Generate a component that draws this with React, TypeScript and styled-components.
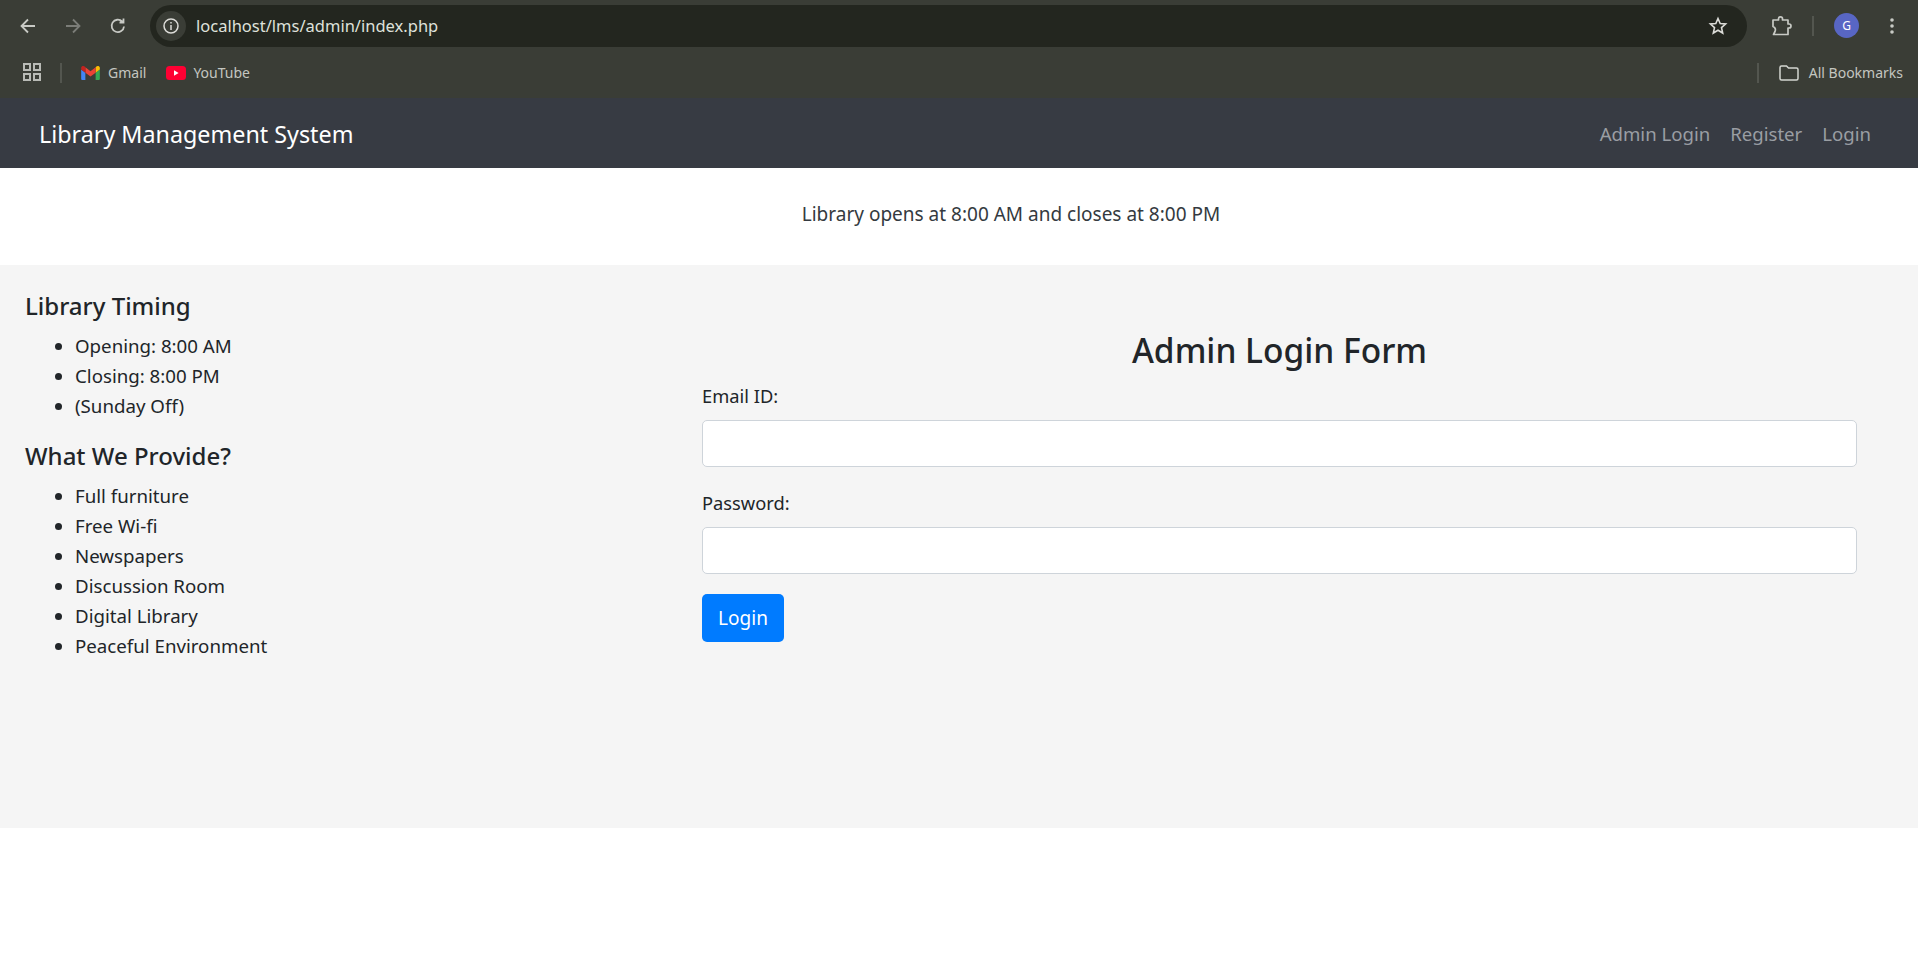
import React from 'react';
import styled, { createGlobalStyle } from 'styled-components';

const Global = createGlobalStyle`
  html, body { margin: 0; padding: 0; background: #fff; }
  * { box-sizing: border-box; }
`;

const pageFont = `"Noto Sans", "Open Sans", sans-serif`;

const Page = styled.div`
  height: 961px;
  overflow: hidden;
  font-family: ${pageFont};
  color: #212529;
`;

const Toolbar = styled.div`
  height: 50px;
  background: #3a3d36;
  display: flex;
  align-items: center;
  padding: 1px 23px 0 5px;
`;

const NavIcon = styled.div<{ $dim?: boolean }>`
  width: 45px;
  height: 32px;
  display: flex;
  align-items: center;
  justify-content: center;
  color: ${p => (p.$dim ? '#7b7d78' : '#c8cac5')};
`;

const Omnibox = styled.div`
  flex: 1;
  height: 42px;
  margin: 0 23px 0 10px;
  border-radius: 21px;
  background: #23261f;
  display: flex;
  align-items: center;
  padding: 0 19px 0 6px;
`;

const InfoChip = styled.div`
  width: 30px;
  height: 30px;
  border-radius: 50%;
  background: #3a3d36;
  display: flex;
  align-items: center;
  justify-content: center;
  color: #dcdcd8;
`;

const Url = styled.div`
  flex: 1;
  margin-left: 10px;
  font-size: 16.5px;
  color: #dfe1db;
`;

const Divider = styled.div<{ $left?: number }>`
  width: 2px;
  height: 20px;
  margin-left: ${p => p.$left ?? 0}px;
  background: #53564f;
`;

const Avatar = styled.div`
  width: 25px;
  height: 25px;
  border-radius: 50%;
  background: #5866c4;
  color: #fff;
  font-size: 12px;
  display: flex;
  align-items: center;
  justify-content: center;
  margin: 0 30px 0 20px;
`;

const Extras = styled.div`
  display: flex;
  align-items: center;
  color: #c8cac5;
`;

const BookmarkBar = styled.div`
  height: 48px;
  background: #3a3d36;
  display: flex;
  align-items: center;
  padding: 0 15px 3px 23px;
  font-size: 14px;
  color: #c4c6c0;
`;

const Bookmark = styled.div<{ $gap: number; $left: number }>`
  display: flex;
  align-items: center;
  gap: ${p => p.$gap}px;
  margin-left: ${p => p.$left}px;
`;

const BarSpacer = styled.div`
  flex: 1;
`;

const Navbar = styled.nav`
  height: 70px;
  background: #373b43;
  display: flex;
  align-items: center;
  justify-content: space-between;
  padding: 2px 47px 0 39px;
`;

const Brand = styled.div`
  font-size: 23.3px;
  color: #fff;
`;

const NavLinks = styled.div`
  display: flex;
  gap: 20px;
  margin-bottom: 2px;
`;

const NavLink = styled.a`
  font-size: 18.6px;
  color: #9a9ea3;
`;

const Notice = styled.div`
  height: 97px;
  display: flex;
  align-items: center;
  justify-content: center;
  padding: 0 0 5px 104px;
  font-size: 19px;
  color: #343a40;
`;

const Content = styled.main`
  height: 563px;
  background: #f5f5f5;
  display: grid;
  grid-template-columns: 677px 1fr;
  padding: 26px 61px 0 25px;
`;

const Heading = styled.h5`
  margin: 0 0 10px;
  font-size: 24px;
  line-height: 30px;
  font-weight: 500;
`;

const List = styled.ul`
  margin: 0 0 20px;
  padding-left: 50px;
  font-size: 18.7px;
  line-height: 30px;
`;

const FormCol = styled.section`
  padding-top: 38.4px;
`;

const FormTitle = styled.h3`
  margin: 0 0 9px;
  text-align: center;
  font-size: 33.5px;
  line-height: 42px;
  font-weight: 500;
`;

const Field = styled.div`
  margin-bottom: 20px;
`;

const Label = styled.label`
  display: block;
  margin-bottom: 8.5px;
  font-size: 18.3px;
  line-height: 31px;
`;

const Input = styled.input`
  display: block;
  width: 100%;
  height: 47.5px;
  background: #fff;
  border: 1px solid #ced4da;
  border-radius: 5px;
  outline: none;
`;

const Submit = styled.button`
  width: 82px;
  height: 47.5px;
  border: 0;
  border-radius: 5px;
  background: #007bff;
  color: #fff;
  font-family: ${pageFont};
  font-size: 19px;
`;

const GmailIcon = () => (
  <svg width="19" height="14" viewBox="0 0 20 15">
    <path d="M1.4 15H4.5V7.2L0 3.8V13.6C0 14.4.6 15 1.4 15Z" fill="#4285f4" />
    <path d="M15.5 15H18.6C19.4 15 20 14.4 20 13.6V3.8L15.5 7.2Z" fill="#34a853" />
    <path d="M15.5 1.3V7.2L20 3.8V2C20 .3 18 -.7 16.7 .4Z" fill="#fbbc04" />
    <path d="M4.5 7.2V1.3L10 5.5L15.5 1.3V7.2L10 11.3Z" fill="#ea4335" />
    <path d="M0 2V3.8L4.5 7.2V1.3L3.3 .4C2 -.7 0 .3 0 2Z" fill="#c5221f" />
  </svg>
);

const YoutubeIcon = () => (
  <svg width="20" height="14" viewBox="0 0 20 14">
    <rect width="20" height="14" rx="3.5" fill="#ff0033" />
    <path d="M8 4.3V9.7L12.6 7Z" fill="#fff" />
  </svg>
);

export default function App() {
  return (
    <Page>
      <Global />
      <Toolbar>
        <NavIcon>
          <svg width="18" height="18" viewBox="0 0 18 18" fill="none" stroke="currentColor" strokeWidth="1.8"><path d="M16 9H3M9 2.5L2.5 9L9 15.5" /></svg>
        </NavIcon>
        <NavIcon $dim>
          <svg width="18" height="18" viewBox="0 0 18 18" fill="none" stroke="currentColor" strokeWidth="1.8"><path d="M2 9H15M9 2.5L15.5 9L9 15.5" /></svg>
        </NavIcon>
        <NavIcon>
          <svg width="18" height="18" viewBox="0 0 18 18" fill="none" stroke="currentColor" strokeWidth="1.8"><path d="M15 9.5A6.2 6.2 0 1 1 13.2 4.5M14.5 1.5V5.5H10.5" /></svg>
        </NavIcon>
        <Omnibox>
          <InfoChip>
            <svg width="18" height="18" viewBox="0 0 18 18" fill="none" stroke="currentColor" strokeWidth="1.5"><circle cx="9" cy="9" r="7" /><path d="M9 8V13M9 5V6.4" /></svg>
          </InfoChip>
          <Url>localhost/lms/admin/index.php</Url>
          <svg width="20" height="20" viewBox="0 0 20 20" fill="none" stroke="#dcdcd8" strokeWidth="1.6"><path d="M10 2.5L12.2 7.5L17.6 8L13.5 11.6L14.7 17L10 14.2L5.3 17L6.5 11.6L2.4 8L7.8 7.5Z" /></svg>
        </Omnibox>
        <Extras>
          <svg width="22" height="22" viewBox="0 0 22 22" fill="none" stroke="currentColor" strokeWidth="1.7" strokeLinejoin="round"><path d="M3 5H8.5V3.8A2 2 0 0 1 12.5 3.8V5H18V9H19A2 2 0 0 1 19 13H18V19.5H3.5L5 16.5C5.8 14.5 5.5 12.5 3 11.5Z" /></svg>
          <Divider $left={20} />
          <Avatar>G</Avatar>
          <svg width="6" height="18" viewBox="0 0 6 18" fill="currentColor"><circle cx="3" cy="3" r="1.8" /><circle cx="3" cy="9" r="1.8" /><circle cx="3" cy="15" r="1.8" /></svg>
        </Extras>
      </Toolbar>
      <BookmarkBar>
        <svg width="19" height="19" viewBox="0 0 19 19" fill="none" stroke="#b9bbb6" strokeWidth="2"><rect x="1" y="1" width="6" height="6" /><rect x="11" y="1" width="6" height="6" /><rect x="1" y="11" width="6" height="6" /><rect x="11" y="11" width="6" height="6" /></svg>
        <Divider $left={18} />
        <Bookmark $gap={8} $left={19}><GmailIcon />Gmail</Bookmark>
        <Bookmark $gap={7} $left={20}><YoutubeIcon />YouTube</Bookmark>
        <BarSpacer />
        <Divider />
        <Bookmark $gap={10} $left={20}>
          <svg width="20" height="16" viewBox="0 0 20 16" fill="none" stroke="#d4d6d1" strokeWidth="1.5"><path d="M1 2.5C1 1.5 1.5 1 2.5 1H7.5L9.5 3H17.5C18.5 3 19 3.5 19 4.5V13.5C19 14.5 18.5 15 17.5 15H2.5C1.5 15 1 14.5 1 13.5Z" /></svg>
          All Bookmarks
        </Bookmark>
      </BookmarkBar>
      <Navbar>
        <Brand>Library Management System</Brand>
        <NavLinks>
          <NavLink>Admin Login</NavLink>
          <NavLink>Register</NavLink>
          <NavLink>Login</NavLink>
        </NavLinks>
      </Navbar>
      <Notice>Library opens at 8:00 AM and closes at 8:00 PM</Notice>
      <Content>
        <div>
          <Heading>Library Timing</Heading>
          <List>
            <li>Opening: 8:00 AM</li>
            <li>Closing: 8:00 PM</li>
            <li>(Sunday Off)</li>
          </List>
          <Heading>What We Provide?</Heading>
          <List>
            <li>Full furniture</li>
            <li>Free Wi-fi</li>
            <li>Newspapers</li>
            <li>Discussion Room</li>
            <li>Digital Library</li>
            <li>Peaceful Environment</li>
          </List>
        </div>
        <FormCol>
          <FormTitle>Admin Login Form</FormTitle>
          <Field>
            <Label>Email ID:</Label>
            <Input type="text" />
          </Field>
          <Field>
            <Label>Password:</Label>
            <Input type="password" />
          </Field>
          <Submit>Login</Submit>
        </FormCol>
      </Content>
    </Page>
  );
}
